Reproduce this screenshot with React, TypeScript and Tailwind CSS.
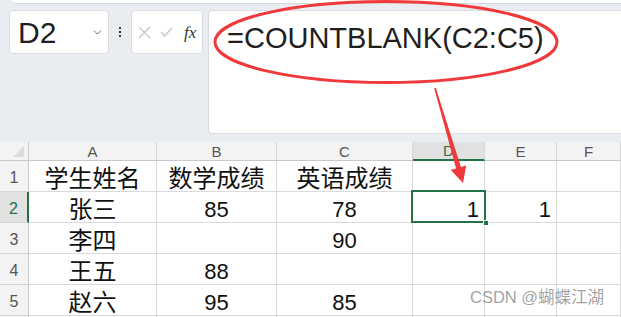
import { Fragment } from "react";
import { ChevronDown } from "lucide-react";

const cols = ["A", "B", "C", "D", "E", "F"];

const rows: string[][] = [
  ["学生姓名", "数学成绩", "英语成绩", "", "", ""],
  ["张三", "85", "78", "1", "1", ""],
  ["李四", "", "90", "", "", ""],
  ["王五", "88", "", "", "", ""],
  ["赵六", "95", "85", "", "", ""],
  ["", "", "", "", "", ""],
];

const HeaderCell = ({ label }: { label: string }) => {
  const active = label === "D";
  return (
    <div
      className={`flex items-center justify-center border-r border-[#d6d6d6] text-[15px] leading-none ${
        active
          ? "bg-[#e1e1e1] border-b-2 border-b-[#217346] text-[#217346]"
          : "bg-[#f3f3f3] border-b border-b-[#c9c9c9] text-[#555]"
      }`}
    >
      {label}
    </div>
  );
};

const App = () => {
  return (
    <div className="relative w-[621px] h-[317px] overflow-hidden bg-[#e9ecf0] font-['Liberation_Sans','Noto_Sans_CJK_SC',sans-serif]">
      {/* ribbon edge */}
      <div className="ml-[12px] h-[4px] rounded-bl-[4px] bg-white border-b border-[#d7d9dc]" />

      {/* formula row */}
      <div className="flex items-start pl-[9px] pt-[6px]">
        <div className="flex items-center justify-between w-[100px] h-[44px] bg-white border border-[#d9dbdf] rounded-[4px] pl-[8px] pr-[4px]">
          <span className="text-[30px] leading-none text-[#1f1f1f] pt-[1px]">D2</span>
          <ChevronDown size={13} strokeWidth={1.6} className="text-[#555]" />
        </div>
        <div className="flex flex-col items-center justify-center gap-[1.5px] w-[22px] h-[44px]">
          <div className="w-[2.5px] h-[2.5px] bg-[#333]" />
          <div className="w-[2.5px] h-[2.5px] bg-[#333]" />
          <div className="w-[2.5px] h-[2.5px] bg-[#333]" />
        </div>
        <div className="flex items-center w-[72px] h-[44px] bg-white border border-[#d9dbdf] rounded-[4px] pl-[6px]">
          <svg width="13" height="13" viewBox="0 0 13 13" className="mr-[9px]">
            <path d="M1 1L12 12M12 1L1 12" stroke="#c4c4c4" strokeWidth="1.2" fill="none" />
          </svg>
          <svg width="13" height="10" viewBox="0 0 13 10" className="mr-[11px]">
            <path d="M1 5L4.5 9L12 1" stroke="#c4c4c4" strokeWidth="1.2" fill="none" />
          </svg>
          <span className="font-['Liberation_Serif',serif] italic text-[17px] leading-none text-[#333]">fx</span>
        </div>
        <div className="ml-[5px] mr-[-12px] flex-1 h-[124px] bg-white border border-[#d9dbdf] rounded-[4px] pl-[18px] pt-[13px]">
          <span className="text-[29px] leading-none text-[#1f1f1f]">=COUNTBLANK(C2:C5)</span>
        </div>
      </div>

      {/* sheet */}
      <div className="relative mt-[8px] grid grid-cols-[29px_128px_120px_136px_72px_72px_1fr] grid-rows-[19px_31px_31px_31px_31px_31px_31px] bg-white">
        <div className="relative bg-[#f3f3f3] border-r border-b border-[#c9c9c9]">
          <div className="absolute right-[4px] bottom-[3px] w-0 h-0 border-l-[11px] border-l-transparent border-b-[11px] border-b-[#dcdcdc]" />
        </div>
        {cols.map((c) => (
          <HeaderCell key={c} label={c} />
        ))}
        {rows.map((row, r) => (
          <Fragment key={r}>
            <div
              className={`flex items-center justify-center pt-[3px] text-[16px] leading-none border-b border-[#d6d6d6] ${
                r === 1
                  ? "bg-[#e1e1e1] border-r-2 border-r-[#217346] text-[#217346]"
                  : "bg-[#f3f3f3] border-r border-r-[#c9c9c9] text-[#555]"
              }`}
            >
              {r < 5 ? r + 1 : ""}
            </div>
            {row.map((v, c) => (
              <div
                key={c}
                className={`flex items-center pt-[5px] border-r border-b border-[#dadada] text-[#111] leading-none ${
                  c >= 3 ? "justify-end pr-[5px]" : "justify-center"
                } ${/^\d+$/.test(v) ? "text-[22px]" : "text-[24px]"}`}
              >
                {v}
              </div>
            ))}
          </Fragment>
        ))}

        {/* selected cell D2 */}
        <div className="absolute left-[411px] top-[48px] w-[75px] h-[33px] border-2 border-[#217346]">
          <div className="absolute right-[-5px] bottom-[-5px] w-[6px] h-[6px] bg-[#217346] border border-white" />
        </div>
      </div>

      {/* annotation */}
      <svg className="absolute left-0 top-0 pointer-events-none" width="621" height="317">
        <ellipse cx="386" cy="42" rx="171" ry="40.5" fill="none" stroke="#f0393b" strokeWidth="3" />
        <polygon
          points="434.2,88.2 435.8,87.8 460.9,167 466.2,165.4 463,183 450.8,170 456.1,168.4"
          fill="#f0393b"
        />
      </svg>

      {/* watermark */}
      <div className="absolute left-[470px] top-[289px] text-[16.5px] leading-none text-[#8a8a8a]/80">
        CSDN @蝴蝶江湖
      </div>
    </div>
  );
};

export default App;
